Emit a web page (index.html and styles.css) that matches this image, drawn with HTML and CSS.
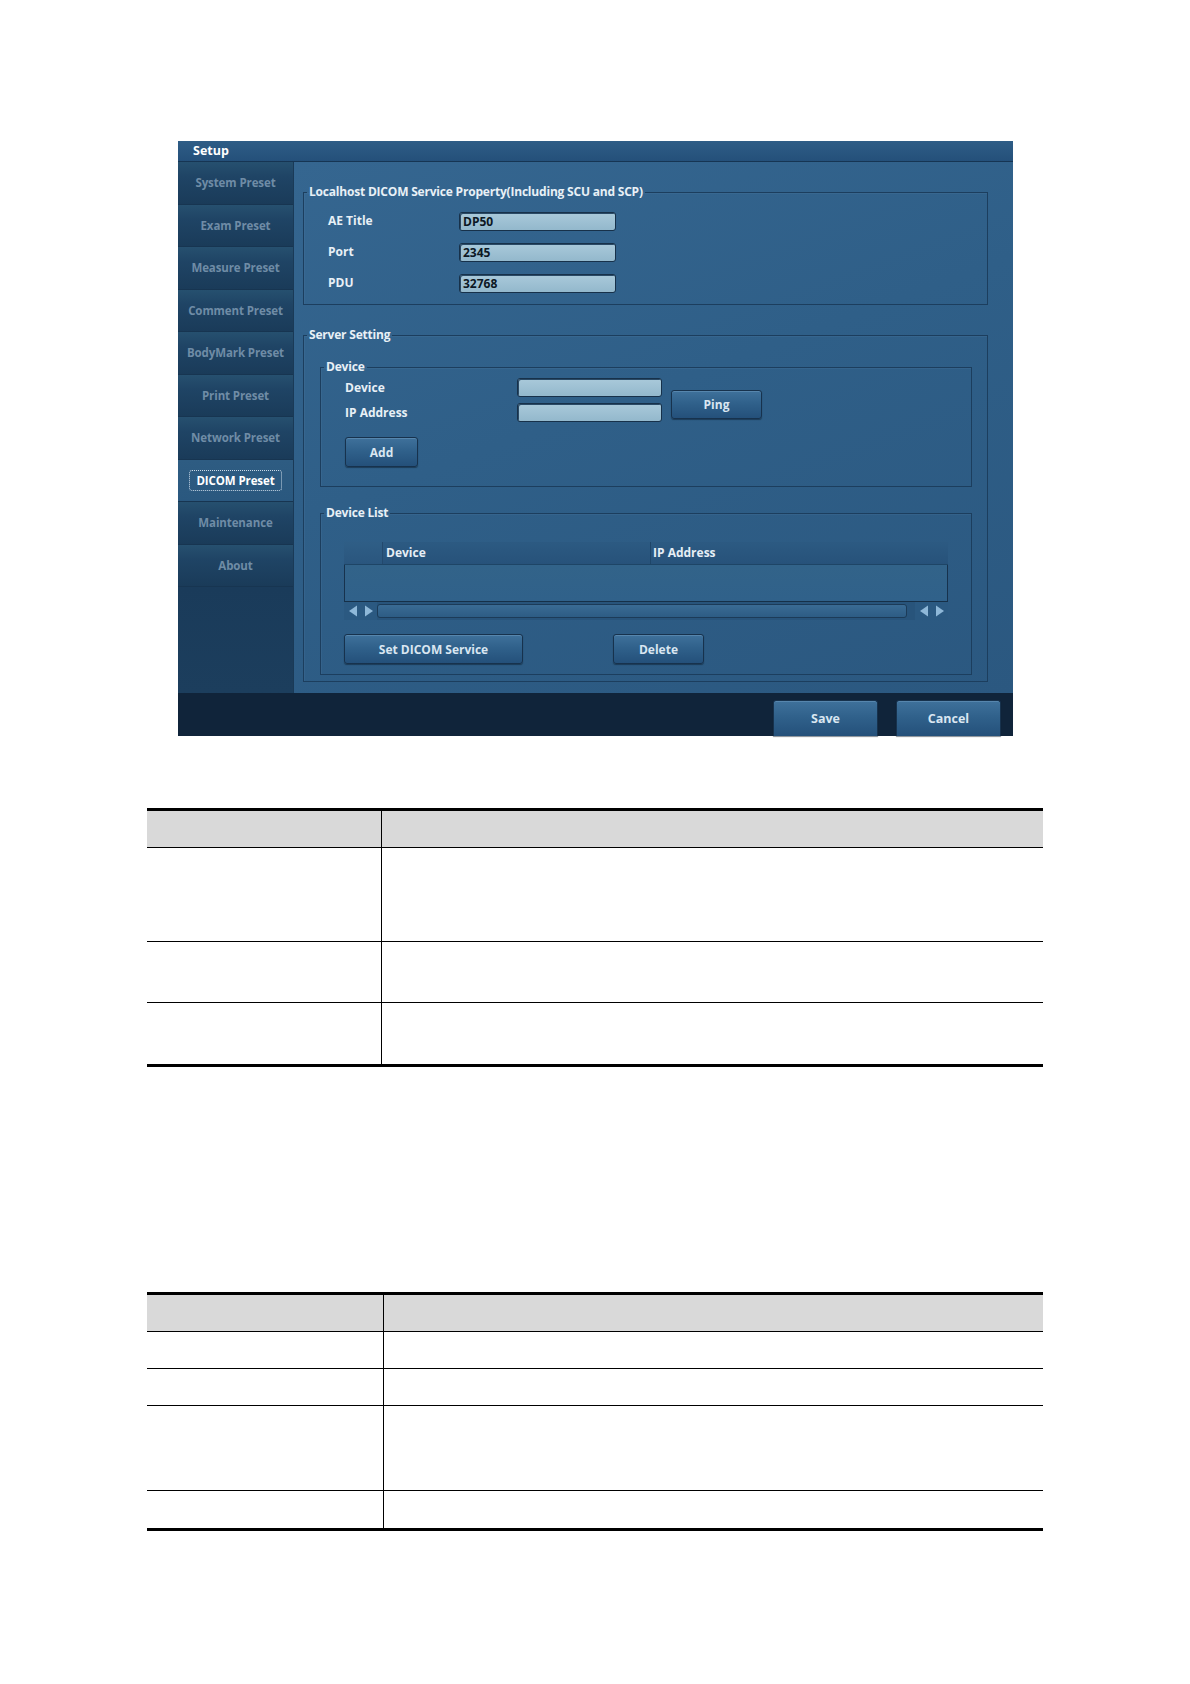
FILE: index.html
```html
<!DOCTYPE html>
<html>
<head>
<meta charset="utf-8">
<title>Setup - DICOM Preset</title>
<link rel="stylesheet" href="styles.css">
</head>
<body>
<div class="panel">
  <div class="titlebar">Setup</div>
  <div class="main">
    <nav class="sidebar">
      <div class="nav-item">System Preset</div>
      <div class="nav-item">Exam Preset</div>
      <div class="nav-item">Measure Preset</div>
      <div class="nav-item">Comment Preset</div>
      <div class="nav-item">BodyMark Preset</div>
      <div class="nav-item">Print Preset</div>
      <div class="nav-item">Network Preset</div>
      <div class="nav-item active"><span class="focus">DICOM Preset</span></div>
      <div class="nav-item">Maintenance</div>
      <div class="nav-item">About</div>
    </nav>
    <div class="content">
      <fieldset class="group g-local">
        <legend>Localhost DICOM Service Property(Including SCU and SCP)</legend>
        <div class="prop-row"><span class="lbl">AE Title</span><span class="field f-local">DP50</span></div>
        <div class="prop-row"><span class="lbl">Port</span><span class="field f-local">2345</span></div>
        <div class="prop-row"><span class="lbl">PDU</span><span class="field f-local">32768</span></div>
      </fieldset>

      <fieldset class="group g-server">
        <legend>Server Setting</legend>
        <fieldset class="group g-device">
          <legend>Device</legend>
          <div class="dev-grid">
            <span class="lbl">Device</span><span class="field f-dev"></span>
            <span class="lbl">IP Address</span><span class="field f-dev"></span>
            <button class="btn b-ping">Ping</button>
          </div>
          <button class="btn b-add">Add</button>
        </fieldset>

        <fieldset class="group g-list">
          <legend>Device List</legend>
          <div class="dlist">
            <div class="dl-head">
              <span class="dh-idx"></span>
              <span class="dh-dev">Device</span>
              <span class="dh-ip">IP Address</span>
            </div>
            <div class="dl-body"></div>
            <div class="dl-scroll">
              <span class="arrows"><svg width="26" height="12" viewBox="0 0 26 12"><path d="M1 6 L9 0.5 L9 11.5 Z" fill="#8fb8d8"/><path d="M25 6 L17 0.5 L17 11.5 Z" fill="#8fb8d8"/></svg></span>
              <span class="track"></span>
              <span class="arrows"><svg width="26" height="12" viewBox="0 0 26 12"><path d="M1 6 L9 0.5 L9 11.5 Z" fill="#8fb8d8"/><path d="M25 6 L17 0.5 L17 11.5 Z" fill="#8fb8d8"/></svg></span>
            </div>
          </div>
          <div class="list-actions">
            <button class="btn b-set">Set DICOM Service</button>
            <button class="btn b-del">Delete</button>
          </div>
        </fieldset>
      </fieldset>
    </div>
  </div>
  <div class="footer">
    <button class="btn b-foot">Save</button>
    <button class="btn b-foot">Cancel</button>
  </div>
</div>

<table class="doc t1">
  <tr class="hd"><th class="c1"></th><th></th></tr>
  <tr class="r93"><td></td><td></td></tr>
  <tr class="r60"><td></td><td></td></tr>
  <tr class="r61"><td></td><td></td></tr>
</table>

<table class="doc t2">
  <tr class="hd"><th class="c1"></th><th></th></tr>
  <tr class="r36"><td></td><td></td></tr>
  <tr class="r36"><td></td><td></td></tr>
  <tr class="r84"><td></td><td></td></tr>
  <tr class="r37"><td></td><td></td></tr>
</table>
</body>
</html>
```

FILE: styles.css
```css
html, body {
  margin: 0;
  padding: 0;
  background: #ffffff;
}
body {
  font-family: "Open Sans", "Liberation Sans", sans-serif;
  padding-top: 141px;
  padding-bottom: 40px;
}

/* ---------- Setup panel ---------- */
.panel {
  margin-left: 178px;
  width: 835px;
  height: 595px;
  display: flex;
  flex-direction: column;
  background: #2d5c84;
}
.titlebar {
  height: 20px;
  border-bottom: 1px solid #163553;
  background: linear-gradient(#2e5d86, #24507a);
  color: #ffffff;
  font-weight: 700;
  font-size: 12.5px;
  line-height: 20px;
  padding-left: 15px;
}
.main {
  display: flex;
  height: 531px;
}
.sidebar {
  width: 115px;
  border-right: 1px solid #1a3a57;
  background: linear-gradient(#1f4465, #1a3b5a 80%, #1c3e5d);
  display: flex;
  flex-direction: column;
}
.nav-item {
  height: 42.5px;
  box-sizing: border-box;
  display: flex;
  align-items: center;
  justify-content: center;
  color: #6f8ca6;
  font-weight: 700;
  font-size: 11.5px;
  letter-spacing: -0.1px;
  background: linear-gradient(#26506f 0%, #1f4465 35%, #1a3b59 100%);
  border-bottom: 1px solid #173551;
}
.nav-item.active {
  background: linear-gradient(#2e5c82, #2a587f);
  color: #ffffff;
}
.focus {
  border: 1px dotted #c8d8e6;
  border-radius: 3px;
  padding: 2px 6px;
}

.content {
  flex: 1;
  padding: 0 25px 0 9px;
  background: linear-gradient(160deg, #356690 0%, #2f5f88 45%, #2b5880 100%);
}

/* fieldsets */
.group {
  margin: 0;
  border: 1px solid #1c3e5e;
  box-shadow: inset 1px 1px 0 rgba(120,160,200,0.10);
  min-width: 0;
}
.group legend {
  color: #e8f0f6;
  font-weight: 700;
  font-size: 12px;
  line-height: 16px;
  padding: 0 2px;
  letter-spacing: -0.2px;
}
.g-local {
  margin-top: 22px;
  padding: 6px 0 5px 24px;
}
.g-local legend { margin-left: -21px; }
.prop-row {
  height: 31px;
  display: flex;
  align-items: center;
}
.lbl {
  color: #e8f0f6;
  font-weight: 700;
  font-size: 12px;
}
.g-local .lbl {
  width: 131px;
  margin-top: -2px;
}
.field {
  display: block;
  box-sizing: border-box;
  height: 19px;
  border: 1px solid #17314a;
  border-radius: 3px;
  background: linear-gradient(#a9c9da, #93b8cc);
  box-shadow: inset 1px 1px 0 #2a4a66;
  color: #0c1824;
  font-weight: 700;
  font-size: 12px;
  line-height: 17px;
  padding-left: 3px;
}
.f-local { width: 157px; }

.g-server {
  margin-top: 22px;
  padding: 16px 15px 6px 16px;
}
.g-server > legend { margin-left: -13px; }
.g-device {
  padding: 0 0 19px 24px;
}
.g-device legend { margin-left: -21px; }
.dev-grid {
  display: grid;
  grid-template-columns: 172px 145px auto;
  grid-template-rows: 25px 25px;
  align-items: center;
}
.dev-grid .lbl { grid-column: 1; }
.dev-grid .f-dev { grid-column: 2; width: 145px; }
.b-ping {
  grid-column: 3;
  grid-row: 1 / span 2;
  margin-left: 9px;
  width: 91px;
  height: 29px;
  margin-top: 8px;
}

.btn {
  box-sizing: border-box;
  border: 1px solid #17324d;
  border-radius: 3px;
  background: linear-gradient(#3f719b 0%, #30618b 45%, #24507a 100%);
  box-shadow: inset 0 1px 0 rgba(160,200,230,0.25), 0 1px 1px rgba(10,25,40,0.5);
  color: #d9e6f1;
  font-family: "Open Sans", "Liberation Sans", sans-serif;
  font-weight: 700;
  font-size: 12px;
  padding: 0;
  display: block;
}
.b-add {
  width: 73px;
  height: 30px;
  margin-top: 12px;
}

.g-list {
  margin-top: 18px;
  padding: 21px 23px 10px 23px;
}
.g-list legend { margin-left: -20px; }
.dlist { width: 604px; }
.dl-head {
  height: 22px;
  display: flex;
  background: linear-gradient(#2c5a82, #27527a);
  border-bottom: 1px solid #1e4566;
  color: #e6eef5;
  font-weight: 700;
  font-size: 12px;
  line-height: 22px;
}
.dh-idx {
  width: 38px;
  border-right: 1px solid #23496d;
  background: linear-gradient(#2f5e86, #2a567e);
}
.dh-dev {
  width: 264px;
  padding-left: 3px;
  border-right: 1px solid #1f4669;
}
.dh-ip { padding-left: 2px; }
.dl-body {
  height: 37px;
  box-sizing: border-box;
  border-left: 1px solid #17324d;
  border-right: 1px solid #17324d;
  border-bottom: 1px solid #163048;
  background: linear-gradient(#326389, #30618a);
}
.dl-scroll {
  height: 18px;
  display: flex;
  align-items: center;
  background: #28547b;
}
.arrows {
  width: 33px;
  height: 18px;
  display: flex;
  align-items: center;
  justify-content: center;
  background: #2b5981;
}
.track {
  flex: 1;
  height: 14px;
  box-sizing: border-box;
  border: 1px solid #1c3b58;
  border-radius: 3px;
  background: linear-gradient(#3a6b94, #2d5c84);
  margin-right: 8px;
}
.list-actions {
  display: flex;
  margin-top: 14px;
}
.b-set { width: 179px; height: 30px; }
.b-del { width: 91px; height: 30px; margin-left: 90px; }

.footer {
  height: 43px;
  background: #10243a;
  display: flex;
  justify-content: flex-end;
  align-items: flex-end;
  padding-right: 12px;
  gap: 18px;
}
.b-foot {
  width: 105px;
  height: 36px;
  border-radius: 3px 3px 0 0;
  border-bottom: none;
  font-size: 12.5px;
}

/* ---------- document tables ---------- */
.doc {
  margin-left: 147px;
  width: 896px;
  border-collapse: collapse;
  border-top: 3px solid #000;
  border-bottom: 3px solid #000;
}
.doc th, .doc td {
  padding: 0;
  border-top: 1px solid #000;
}
.doc th {
  background: #d9d9d9;
  height: 36px;
  border-top: none;
  border-bottom: 1px solid #000;
}
.doc .c1,
.doc td:first-child {
  border-right: 1px solid #000;
}
.t1 { margin-top: 72px; }
.t1 .c1 { width: 234px; }
.t2 { margin-top: 225px; }
.t2 .c1 { width: 236px; }
.r93 td { height: 93px; }
.r60 td { height: 60px; }
.r61 td { height: 61px; }
.r36 td { height: 36px; }
.r37 td { height: 37px; }
.r84 td { height: 84px; }
```
